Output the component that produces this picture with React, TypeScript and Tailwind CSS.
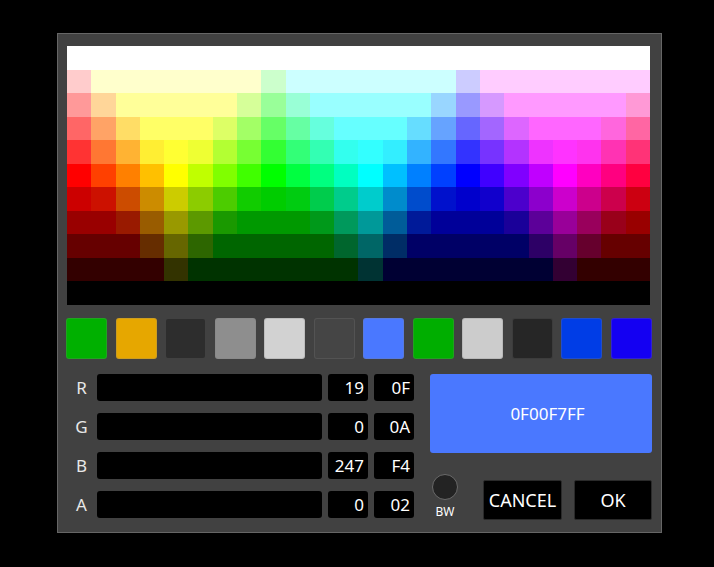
import React from "react";

type Run = [string, number];

const rows: Run[][] = [
  [["bg-[#ffffff]", 24]],
  [["bg-[#ffcccc]", 1], ["bg-[#ffffcc]", 7], ["bg-[#ccffcc]", 1], ["bg-[#ccffff]", 7], ["bg-[#ccccff]", 1], ["bg-[#ffccff]", 7]],
  [["bg-[#ff9999]", 1], ["bg-[#ffd699]", 1], ["bg-[#ffff99]", 5], ["bg-[#d6ff99]", 1], ["bg-[#99ff99]", 1], ["bg-[#99ffd6]", 1], ["bg-[#99ffff]", 5], ["bg-[#99d6ff]", 1], ["bg-[#9999ff]", 1], ["bg-[#d699ff]", 1], ["bg-[#ff99ff]", 5], ["bg-[#ff99d6]", 1]],
  [["bg-[#ff6666]", 1], ["bg-[#ffa366]", 1], ["bg-[#ffdd66]", 1], ["bg-[#ffff66]", 3], ["bg-[#ddff66]", 1], ["bg-[#a3ff66]", 1], ["bg-[#66ff66]", 1], ["bg-[#66ffa3]", 1], ["bg-[#66ffdd]", 1], ["bg-[#66ffff]", 3], ["bg-[#66ddff]", 1], ["bg-[#66a3ff]", 1], ["bg-[#6666ff]", 1], ["bg-[#a366ff]", 1], ["bg-[#dd66ff]", 1], ["bg-[#ff66ff]", 3], ["bg-[#ff66dd]", 1], ["bg-[#ff66a3]", 1]],
  [["bg-[#ff3333]", 1], ["bg-[#ff7733]", 1], ["bg-[#ffb333]", 1], ["bg-[#ffee33]", 1], ["bg-[#ffff33]", 1], ["bg-[#eeff33]", 1], ["bg-[#b3ff33]", 1], ["bg-[#77ff33]", 1], ["bg-[#33ff33]", 1], ["bg-[#33ff77]", 1], ["bg-[#33ffb3]", 1], ["bg-[#33ffee]", 1], ["bg-[#33ffff]", 1], ["bg-[#33eeff]", 1], ["bg-[#33b3ff]", 1], ["bg-[#3377ff]", 1], ["bg-[#3333ff]", 1], ["bg-[#7733ff]", 1], ["bg-[#b333ff]", 1], ["bg-[#ee33ff]", 1], ["bg-[#ff33ff]", 1], ["bg-[#ff33ee]", 1], ["bg-[#ff33b3]", 1], ["bg-[#ff3377]", 1]],
  [["bg-[#ff0000]", 1], ["bg-[#ff4000]", 1], ["bg-[#ff8000]", 1], ["bg-[#ffc000]", 1], ["bg-[#ffff00]", 1], ["bg-[#c0ff00]", 1], ["bg-[#80ff00]", 1], ["bg-[#40ff00]", 1], ["bg-[#00ff00]", 1], ["bg-[#00ff40]", 1], ["bg-[#00ff80]", 1], ["bg-[#00ffc0]", 1], ["bg-[#00ffff]", 1], ["bg-[#00c0ff]", 1], ["bg-[#0080ff]", 1], ["bg-[#0040ff]", 1], ["bg-[#0000ff]", 1], ["bg-[#4000ff]", 1], ["bg-[#8000ff]", 1], ["bg-[#c000ff]", 1], ["bg-[#ff00ff]", 1], ["bg-[#ff00c0]", 1], ["bg-[#ff0080]", 1], ["bg-[#ff0040]", 1]],
  [["bg-[#cc0000]", 1], ["bg-[#cc1100]", 1], ["bg-[#cc4c00]", 1], ["bg-[#cc8c00]", 1], ["bg-[#cccc00]", 1], ["bg-[#8ccc00]", 1], ["bg-[#4ccc00]", 1], ["bg-[#11cc00]", 1], ["bg-[#00cc00]", 1], ["bg-[#00cc11]", 1], ["bg-[#00cc4c]", 1], ["bg-[#00cc8c]", 1], ["bg-[#00cccc]", 1], ["bg-[#008ccc]", 1], ["bg-[#004ccc]", 1], ["bg-[#0011cc]", 1], ["bg-[#0000cc]", 1], ["bg-[#1100cc]", 1], ["bg-[#4c00cc]", 1], ["bg-[#8c00cc]", 1], ["bg-[#cc00cc]", 1], ["bg-[#cc008c]", 1], ["bg-[#cc004c]", 1], ["bg-[#cc0011]", 1]],
  [["bg-[#990000]", 2], ["bg-[#991a00]", 1], ["bg-[#995c00]", 1], ["bg-[#999900]", 1], ["bg-[#5c9900]", 1], ["bg-[#1a9900]", 1], ["bg-[#009900]", 3], ["bg-[#00991a]", 1], ["bg-[#00995c]", 1], ["bg-[#009999]", 1], ["bg-[#005c99]", 1], ["bg-[#001a99]", 1], ["bg-[#000099]", 3], ["bg-[#1a0099]", 1], ["bg-[#5c0099]", 1], ["bg-[#990099]", 1], ["bg-[#99005c]", 1], ["bg-[#99001a]", 1], ["bg-[#990000]", 1]],
  [["bg-[#660000]", 3], ["bg-[#662d00]", 1], ["bg-[#666600]", 1], ["bg-[#2d6600]", 1], ["bg-[#006600]", 5], ["bg-[#00662d]", 1], ["bg-[#006666]", 1], ["bg-[#002d66]", 1], ["bg-[#000066]", 5], ["bg-[#2d0066]", 1], ["bg-[#660066]", 1], ["bg-[#66002d]", 1], ["bg-[#660000]", 2]],
  [["bg-[#330000]", 4], ["bg-[#333300]", 1], ["bg-[#003300]", 7], ["bg-[#003333]", 1], ["bg-[#000033]", 7], ["bg-[#330033]", 1], ["bg-[#330000]", 3]],
  [["bg-[#000000]", 24]],
];

const cells: string[] = rows.flatMap((r) => r.flatMap(([c, n]) => Array.from({ length: n }, () => c)));

const swatches = [
  "bg-[#00b000]",
  "bg-[#e6a700]",
  "bg-[#2d2d2d]",
  "bg-[#8e8e8e]",
  "bg-[#d2d2d2]",
  "bg-[#454545]",
  "bg-[#4a78ff]",
  "bg-[#00ae00]",
  "bg-[#cccccc]",
  "bg-[#262626]",
  "bg-[#003de6]",
  "bg-[#1400f2]",
];

const channels = [
  { l: "R", d: "19", h: "0F" },
  { l: "G", d: "0", h: "0A" },
  { l: "B", d: "247", h: "F4" },
  { l: "A", d: "0", h: "02" },
];

export default function App() {
  return (
    <div className="w-[714px] h-[567px] bg-black pt-[33px] pl-[57px] font-['Noto_Sans',sans-serif] text-white">
      <div className="w-[605px] h-[500px] bg-[#414141] border border-[#666666] pl-[8px] pt-[12px]">
        <div className="ml-[1px] grid grid-cols-24 grid-rows-11 w-[583px] h-[259px]">
          {cells.map((c, i) => (
            <div key={i} className={c} />
          ))}
        </div>
        <div className="mt-[13px] flex justify-between w-[586px]">
          {swatches.map((s, i) => (
            <div key={i} className={`w-[41px] h-[41px] rounded-[3px] border border-[#7f7f7f40] ${s}`} />
          ))}
        </div>
        <div className="mt-[15px] flex">
          <div className="w-[348px] flex flex-col gap-[12px]">
            {channels.map((ch) => (
              <div key={ch.l} className="h-[27px] flex items-center">
                <div className="w-[31px] text-center text-[17px] leading-none text-[#e8e8e8]">{ch.l}</div>
                <div className="w-[225px] h-full bg-black rounded-[3px]" />
                <div className="ml-[6px] w-[40px] h-full bg-black rounded-[3px] flex items-center justify-end pr-[4px] text-[17px] leading-none">
                  {ch.d}
                </div>
                <div className="ml-[6px] w-[40px] h-full bg-black rounded-[3px] flex items-center justify-end pr-[4px] text-[17px] leading-none">
                  {ch.h}
                </div>
              </div>
            ))}
          </div>
          <div className="ml-[16px] w-[222px] flex flex-col">
            <div className="h-[79px] rounded-[3px] bg-[#4a78ff] flex items-center justify-center pl-[13px] text-[17px] leading-none">
              0F00F7FF
            </div>
            <div className="mt-[21px] flex items-start">
              <div className="ml-[2px] w-[26px] flex flex-col items-center">
                <div className="w-[26px] h-[26px] rounded-full bg-[#232323] border border-[#6a6a6a]" />
                <div className="mt-[5px] text-[12px] leading-[14px]">BW</div>
              </div>
              <div className="ml-auto mt-[6px] flex gap-[12px]">
                <div className="w-[79px] h-[40px] bg-black rounded-[2px] border border-[#2a2a2a] flex items-center justify-center text-[18px] leading-none">
                  CANCEL
                </div>
                <div className="w-[78px] h-[40px] bg-black rounded-[2px] border border-[#2a2a2a] flex items-center justify-center text-[18px] leading-none">
                  OK
                </div>
              </div>
            </div>
          </div>
        </div>
      </div>
    </div>
  );
}
